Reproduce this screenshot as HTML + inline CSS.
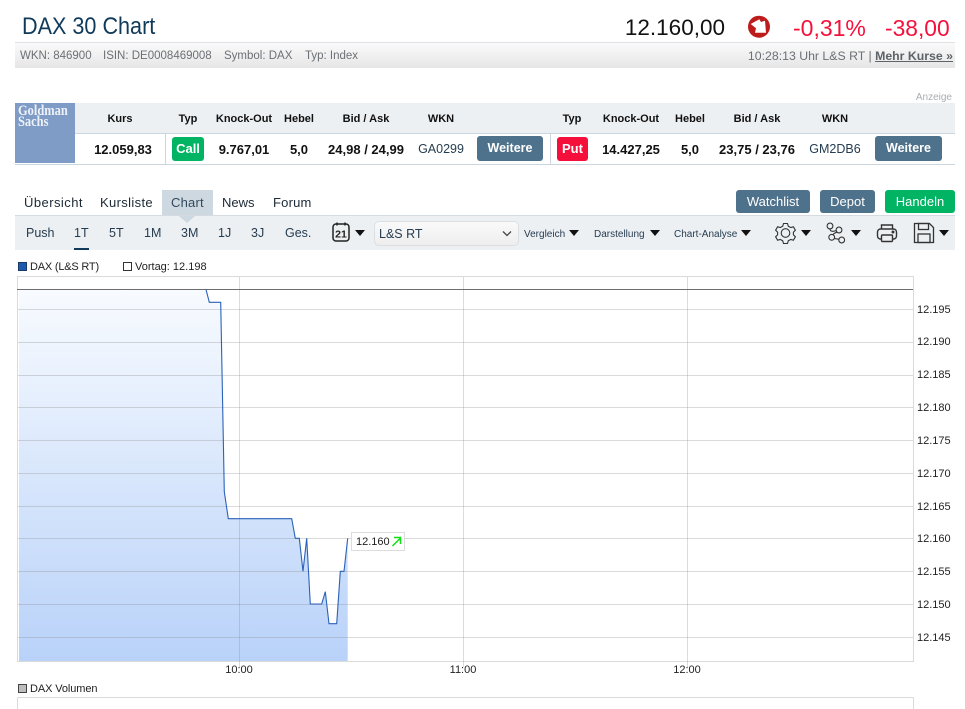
<!DOCTYPE html>
<html><head><meta charset="utf-8"><style>
html,body{margin:0;padding:0;background:#fff;width:965px;height:709px;overflow:hidden}
body{position:relative;font-family:"Liberation Sans",sans-serif;color:#1b2b3a}
.a{position:absolute;white-space:nowrap}
.c{text-align:center}
.h{font-size:11px;font-weight:bold;color:#111;top:112px;line-height:14px}
.v{font-size:13px;font-weight:bold;color:#111;top:142px;line-height:15px}
.w{font-size:12.5px;color:#263c50;top:142px;line-height:15px}
.btn{background:#4f728c;color:#fff;border-radius:3px;text-align:center}
.t{font-size:13px;top:195px;line-height:15px;color:#1c2a36}
.p{font-size:12.5px;top:226px;line-height:15px;color:#263c50}
.d{font-size:10px;top:228px;line-height:13px;color:#263c50}
.tri{position:absolute;width:0;height:0;border-left:5px solid transparent;border-right:5px solid transparent;border-top:6px solid #111}
.y{font-size:11px;left:917px;line-height:13px;color:#222}
.x{font-size:11px;top:664px;line-height:13px;color:#222;width:50px;text-align:center}
.s{font-size:11.5px;top:49px;line-height:14px;color:#6b7076}
</style></head><body>
<div class="a" style="left:22px;top:13px;font-size:24px;line-height:28px;color:#0f3a5a;transform:scaleX(.9);transform-origin:0 0">DAX 30 Chart</div>
<div class="a" style="right:240px;top:14px;font-size:22.500px;line-height:28px;color:#111">12.160,00</div>
<svg class="a" style="left:747px;top:15px" width="24" height="24" viewBox="0 0 24 24"><circle cx="12" cy="11.700" r="11" fill="#bd1c1c"/><path d="M3.700 9L12.300 4.300L14 7L18 5.700L19 17.700L8 17.700L9 13.300Z" fill="#fff"/></svg>
<div class="a" style="left:793px;top:14px;font-size:23px;line-height:28px;color:#f5103c">-0,31%</div>
<div class="a" style="left:885px;top:14px;font-size:22.800px;line-height:28px;color:#f5103c">-38,00</div>
<div class="a" style="left:15px;top:42px;width:940px;height:26px;box-sizing:border-box;border-top:1px solid #dfe3e7;background:linear-gradient(#fafafa,#e6e6e6)"></div>
<div class="a s" style="left:20px">WKN: 846900</div>
<div class="a s" style="left:103px">ISIN: DE0008469008</div>
<div class="a s" style="left:224px">Symbol: DAX</div>
<div class="a s" style="left:305px">Typ: Index</div>
<div class="a" style="right:12px;top:49px;font-size:12.300px;line-height:15px;color:#6b7076">10:28:13 Uhr L&amp;S RT | <b style="text-decoration:underline;color:#5d6369">Mehr Kurse »</b></div>
<div class="a" style="right:13px;top:90px;font-size:10px;line-height:12px;color:#a9adb1;margin-top:2px">Anzeige</div>

<div class="a" style="left:15px;top:103px;width:940px;height:30px;background:#edf0f3;border-bottom:1px solid #ccd6de"></div>
<div class="a" style="left:15px;top:164px;width:940px;height:1px;background:#ccd6de"></div>
<div class="a" style="left:165px;top:134px;width:1px;height:30px;background:#ccd6de"></div>
<div class="a" style="left:550px;top:134px;width:1px;height:30px;background:#ccd6de"></div>
<div class="a" style="left:15px;top:103px;width:60px;height:60px;background:#7f9cc6"></div>
<div class="a" style="left:18px;top:106px;font-family:'Liberation Serif',serif;font-weight:bold;font-size:15px;line-height:11px;color:#eef2f8;transform:scaleX(.83);transform-origin:0 0">Goldman<br>Sachs</div>

<div class="a h c" style="left:90px;width:60px">Kurs</div>
<div class="a h c" style="left:168px;width:40px">Typ</div>
<div class="a h c" style="left:212px;width:64px">Knock-Out</div>
<div class="a h c" style="left:279px;width:40px">Hebel</div>
<div class="a h c" style="left:336px;width:60px">Bid / Ask</div>
<div class="a h c" style="left:420px;width:42px">WKN</div>
<div class="a h c" style="left:552px;width:40px">Typ</div>
<div class="a h c" style="left:599px;width:64px">Knock-Out</div>
<div class="a h c" style="left:670px;width:40px">Hebel</div>
<div class="a h c" style="left:727px;width:60px">Bid / Ask</div>
<div class="a h c" style="left:814px;width:42px">WKN</div>

<div class="a v c" style="left:88px;width:70px">12.059,83</div>
<div class="a btn" style="left:172px;top:137px;width:32px;height:24px;background:#00b463;font-size:13px;font-weight:bold;line-height:24px">Call</div>
<div class="a v c" style="left:212px;width:64px">9.767,01</div>
<div class="a v c" style="left:279px;width:40px">5,0</div>
<div class="a v c" style="left:324px;width:84px">24,98 / 24,99</div>
<div class="a w c" style="left:416px;width:50px">GA0299</div>
<div class="a btn" style="left:477px;top:136px;width:66px;height:25px;font-size:12.500px;font-weight:bold;line-height:24px">Weitere</div>
<div class="a btn" style="left:557px;top:137px;width:31px;height:24px;background:#f5103c;font-size:13px;font-weight:bold;line-height:24px">Put</div>
<div class="a v c" style="left:599px;width:64px">14.427,25</div>
<div class="a v c" style="left:670px;width:40px">5,0</div>
<div class="a v c" style="left:715px;width:84px">23,75 / 23,76</div>
<div class="a w c" style="left:807px;width:56px">GM2DB6</div>
<div class="a btn" style="left:875px;top:136px;width:67px;height:25px;font-size:12.500px;font-weight:bold;line-height:24px">Weitere</div>

<div class="a" style="left:162px;top:190px;width:51px;height:26px;background:#cdd8e0"></div>
<div class="a t" style="left:24px;letter-spacing:.45px">Übersicht</div>
<div class="a t" style="left:100px;letter-spacing:.35px">Kursliste</div>
<div class="a t" style="left:171px;color:#33495c;letter-spacing:.2px">Chart</div>
<div class="a t" style="left:222px">News</div>
<div class="a t" style="left:273px;letter-spacing:.2px">Forum</div>
<div class="a btn" style="left:736px;top:190px;width:74px;height:23px;font-size:13px;line-height:23px">Watchlist</div>
<div class="a btn" style="left:820px;top:190px;width:55px;height:23px;font-size:13px;line-height:23px">Depot</div>
<div class="a btn" style="left:885px;top:190px;width:70px;height:23px;font-size:13px;line-height:23px;background:#00b463">Handeln</div>

<div class="a" style="left:15px;top:215px;width:940px;height:35px;background:#edf0f3;border-top:1px solid #d5dbe0;box-sizing:border-box"></div>
<div class="a" style="left:179px;top:216px;width:0;height:0;border-left:8px solid transparent;border-right:8px solid transparent;border-top:7px solid #cdd8e0"></div>
<div class="a p" style="left:26px">Push</div>
<div class="a p" style="left:74px">1T</div>
<div class="a" style="left:74px;top:248px;width:15px;height:2px;background:#0f3a5a"></div>
<div class="a p" style="left:109px">5T</div>
<div class="a p" style="left:144px">1M</div>
<div class="a p" style="left:181px">3M</div>
<div class="a p" style="left:218px">1J</div>
<div class="a p" style="left:251px">3J</div>
<div class="a p" style="left:285px">Ges.</div>
<svg class="a" style="left:331px;top:221px" width="20" height="22" viewBox="0 0 20 22"><rect x="2" y="3" width="16" height="17" rx="3" fill="none" stroke="#222" stroke-width="1.500"/><path d="M6 1.500v3M14 1.500v3" stroke="#222" stroke-width="1.500"/><text x="10" y="16.500" text-anchor="middle" font-family="Liberation Sans" font-size="10.500" font-weight="bold" fill="#222">21</text></svg>
<div class="tri" style="left:355px;top:230px"></div>
<div class="a" style="left:374px;top:221px;width:145px;height:25px;box-sizing:border-box;border:1px solid #dcdfe2;border-radius:5px;background:linear-gradient(#fafafa,#eeeeee);font-size:12.500px;line-height:24px;padding-left:4px;color:#263c50">L&amp;S RT</div>
<svg class="a" style="left:501px;top:230px" width="12" height="8" viewBox="0 0 12 8"><path d="M2 1.500L6 5.500L10 1.500" fill="none" stroke="#444" stroke-width="1.300"/></svg>
<div class="a d" style="left:524px">Vergleich</div><div class="tri" style="left:569px;top:230px"></div>
<div class="a d" style="left:594px">Darstellung</div><div class="tri" style="left:650px;top:230px"></div>
<div class="a d" style="left:674px">Chart-Analyse</div><div class="tri" style="left:741px;top:230px"></div>
<svg class="a" style="left:775px;top:222px" width="21" height="22" viewBox="0 0 21 22" fill="none" stroke="#333" stroke-width="1.100"><path d="M8.500 1.500h4l.8 2.700 2.400 1.300 2.700-.7 2 3.400-2 2 0 2.600 2 2-2 3.400-2.700-.7-2.400 1.300-.8 2.700h-4l-.8-2.700-2.400-1.300-2.700.7-2-3.400 2-2 0-2.600-2-2 2-3.400 2.700.7 2.400-1.300z"/><circle cx="10.500" cy="11" r="4.300"/></svg>
<div class="tri" style="left:801px;top:230px"></div>
<svg class="a" style="left:826px;top:222px" width="21" height="22" viewBox="0 0 21 22" fill="none" stroke="#333" stroke-width="1.100"><circle cx="4" cy="4" r="2.900"/><circle cx="13" cy="8" r="2.900"/><circle cx="5.700" cy="15.300" r="2.900"/><circle cx="15.700" cy="18" r="2.900"/><path d="M4 6.900C4 9.500 7 10 10.100 8.500M11 10.200C8.500 11 7.500 11.500 7 12.800M8.300 16.500L13 17.300"/></svg>
<div class="tri" style="left:851px;top:230px"></div>
<svg class="a" style="left:876px;top:222px" width="22" height="22" viewBox="0 0 22 22" fill="none" stroke="#333" stroke-width="1.400"><path d="M5.500 7V3h11v4"/><rect x="1.500" y="7" width="19" height="10" rx="3"/><rect x="5.500" y="13" width="11" height="6.500" rx="1" fill="#edf0f3"/><circle cx="17" cy="10" r=".8" fill="#333"/></svg>
<svg class="a" style="left:913px;top:222px" width="22" height="22" viewBox="0 0 22 22" fill="none" stroke="#333" stroke-width="1.300"><path d="M1.500 1.500h15l4 4v15h-19z"/><rect x="5.500" y="1.500" width="10" height="6"/><rect x="5" y="12" width="12" height="8.500"/></svg>
<div class="tri" style="left:939px;top:230px"></div>

<div class="a" style="left:18px;top:262px;width:7px;height:7px;background:#1e5ab0;border:1px solid #1a3a66"></div>
<div class="a" style="left:30px;top:261px;font-size:11px;line-height:13px;color:#222;letter-spacing:-.2px">DAX (L&amp;S RT)</div>
<div class="a" style="left:123px;top:262px;width:7px;height:7px;background:#fff;border:1px solid #333"></div>
<div class="a" style="left:135px;top:261px;font-size:11px;line-height:13px;color:#222">Vortag: 12.198</div>

<svg class="a" style="left:0;top:0" width="965" height="709" viewBox="0 0 965 709">
<defs><linearGradient id="g" x1="0" y1="289" x2="0" y2="661" gradientUnits="userSpaceOnUse"><stop offset="0" stop-color="#f8fbff"/><stop offset="1" stop-color="#b9d2f9"/></linearGradient></defs>
<path d="M19 289.500H206L209.300 302.300H220.700L224.300 491.700L228.300 518.700H291.700L295.300 538.300H299.300L303 571.300L306.700 538.300L310.300 604H321.700L325.300 591.700L329 623.700H336.700L340.300 571.300H344L347.700 538.300V661H19Z" fill="url(#g)"/>
<g fill="none" stroke="#8c8c8c" stroke-opacity=".32" stroke-width="1">
<path d="M17.500 276.500H913.500V661.500H17.500Z"/>
<path d="M18 309.500H913M18 342.500H913M18 375.500H913M18 407.500H913M18 440.500H913M18 473.500H913M18 506.500H913M18 538.500H913M18 571.500H913M18 604.500H913M18 637.500H913"/>
<path d="M239.500 277V667M463.500 277V667M687.500 277V667"/>
<path d="M17.500 697.500H913.500M17.500 697.500V709M913.500 697.500V709"/>
</g>
<path d="M17 289.500H913" stroke="#6d6d6d" stroke-width="1" fill="none"/>
<path d="M206 289.500L209.300 302.300H220.700L224.300 491.700L228.300 518.700H291.700L295.300 538.300H299.300L303 571.300L306.700 538.300L310.300 604H321.700L325.300 591.700L329 623.700H336.700L340.300 571.300H344L347.700 538.300" stroke="#2b62b8" stroke-width="1.100" fill="none"/>
<rect x="351.500" y="532.500" width="53" height="18" fill="#fff" stroke="#dcdcdc"/>
<path d="M392.500 546L400 538.500M394 537.500H400.500V544" stroke="#12e012" stroke-width="1.500" fill="none"/>
</svg>
<div class="a" style="left:356px;top:536px;font-size:11px;line-height:13px;color:#222">12.160</div>
<div class="a y" style="top:304px">12.195</div>
<div class="a y" style="top:336px">12.190</div>
<div class="a y" style="top:369px">12.185</div>
<div class="a y" style="top:402px">12.180</div>
<div class="a y" style="top:435px">12.175</div>
<div class="a y" style="top:468px">12.170</div>
<div class="a y" style="top:501px">12.165</div>
<div class="a y" style="top:533px">12.160</div>
<div class="a y" style="top:566px">12.155</div>
<div class="a y" style="top:599px">12.150</div>
<div class="a y" style="top:632px">12.145</div>
<div class="a x" style="left:214px">10:00</div>
<div class="a x" style="left:438px">11:00</div>
<div class="a x" style="left:662px">12:00</div>
<div class="a" style="left:18px;top:684px;width:7px;height:7px;background:#bdbdbd;border:1px solid #444"></div>
<div class="a" style="left:30px;top:683px;font-size:11px;line-height:13px;color:#222;letter-spacing:-.1px">DAX Volumen</div>
</body></html>
